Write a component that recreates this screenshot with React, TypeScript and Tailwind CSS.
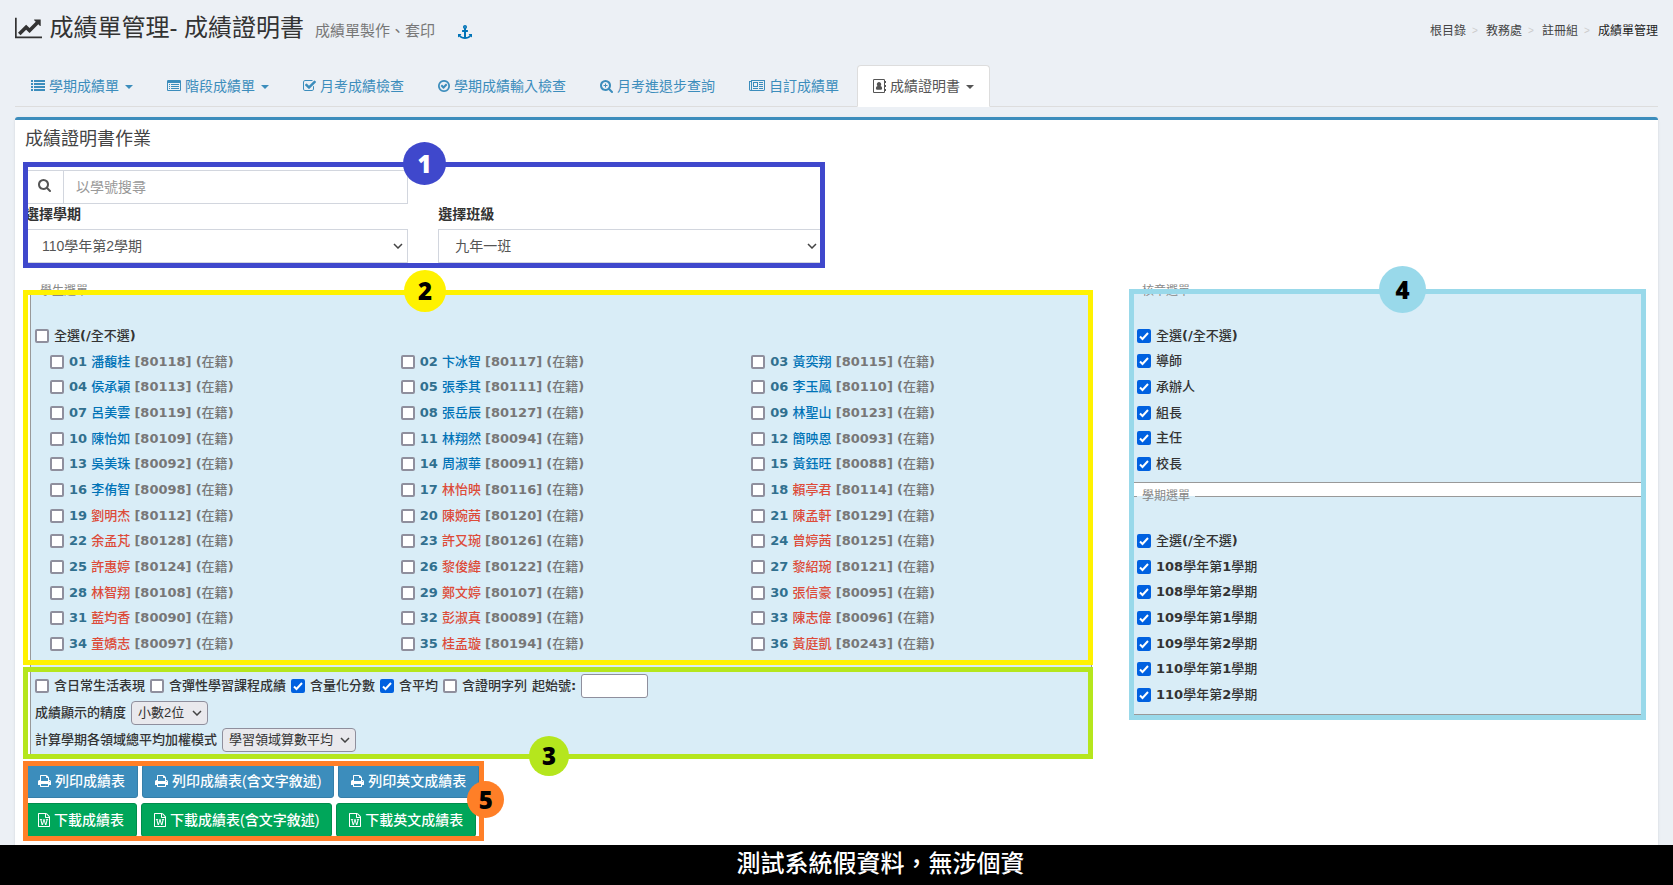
import React from "react";
import classNames from "clsx";

const icons = {
  lineChart: {
    box: "0 0 2048 1792",
    d: "M2048 1536v128h-2048v-1536h128v1408h1920zm-128-1248v435q0 21-19.5 29.5t-35.5-7.5l-121-121-633 633q-10 10-23 10t-23-10l-233-233-416 416-192-192 585-585q10-10 23-10t23 10l233 233 464-464-121-121q-16-16-7.5-35.5t29.5-19.5h435q14 0 23 9t9 23z",
  },
  anchor: {
    box: "0 0 1792 1792",
    d: "M960 256q0-26-19-45t-45-19-45 19-19 45 19 45 45 19 45-19 19-45zm832 928v352q0 22-20 30-8 2-12 2-12 0-23-9l-93-93q-119 143-318.5 226.5t-429.5 83.5-429.5-83.5-318.5-226.5l-93 93q-9 9-23 9-4 0-12-2-20-8-20-30v-352q0-14 9-23t23-9h352q22 0 30 20 8 19-7 35l-100 100q67 91 189.5 153.5t271.5 82.5v-647h-192q-26 0-45-19t-19-45v-128q0-26 19-45t45-19h192v-163q-58-34-93-92.5t-35-128.5q0-106 75-181t181-75 181 75 75 181q0 70-35 128.5t-93 92.5v163h192q26 0 45 19t19 45v128q0 26-19 45t-45 19h-192v647q149-20 271.5-82.5t189.5-153.5l-100-100q-15-16-7-35 8-20 30-20h352q14 0 23 9t9 23z",
  },
  list: {
    box: "0 0 1792 1792",
    d: "M0 128h256v256h-256zM384 128h1408v256h-1408zM0 512h256v256h-256zM384 512h1408v256h-1408zM0 896h256v256h-256zM384 896h1408v256h-1408zM0 1280h256v256h-256zM384 1280h1408v256h-1408z",
  },
  listAlt: {
    box: "0 0 1792 1792",
    d: "M256 640h128v128h-128zM512 640h1024v128h-1024zM256 896h128v128h-128zM512 896h1024v128h-1024zM256 1152h128v128h-128zM512 1152h1024v128h-1024zM1664 1376v-832q0-13-9.5-22.5t-22.5-9.5h-1472q-13 0-22.5 9.5t-9.5 22.5v832q0 13 9.5 22.5t22.5 9.5h1472q13 0 22.5-9.5t9.5-22.5zm128-1088v1088q0 66-47 113t-113 47h-1472q-66 0-113-47t-47-113v-1088q0-66 47-113t113-47h1472q66 0 113 47t47 113z",
  },
  checkSquare: {
    box: "64 0 1664 1792",
    d: "M1472 930v318q0 119-84.5 203.5t-203.5 84.5h-832q-119 0-203.5-84.5t-84.5-203.5v-832q0-119 84.5-203.5t203.5-84.5h832q63 0 117 25 15 7 18 23 3 17-9 29l-49 49q-10 10-23 10-3 0-9-2-23-6-45-6h-832q-66 0-113 47t-47 113v832q0 66 47 113t113 47h832q66 0 113-47t47-113v-254q0-13 9-22l64-64q10-10 23-10 6 0 12 3 20 8 20 29zm231-489l-814 814q-24 24-57 24t-57-24l-430-430q-24-24-24-57t24-57l110-110q24-24 57-24t57 24l263 263 647-647q24-24 57-24t57 24l110 110q24 24 24 57t-24 57z",
  },
  checkCircle: {
    box: "128 0 1536 1792",
    d: "M1299 813l-422 422q-19 19-45 19t-45-19l-294-294q-19-19-19-45t19-45l102-102q19-19 45-19t45 19l147 147 275-275q19-19 45-19t45 19l102 102q19 19 19 45t-19 45zm141 83q0-148-73-273t-198-198-273-73-273 73-198 198-73 273 73 273 198 198 273 73 273-73 198-198 73-273zm224 0q0 209-103 385.5t-279.5 279.5-385.5 103-385.5-103-279.5-279.5-103-385.5 103-385.5 279.5-279.5 385.5-103 385.5 103 279.5 279.5 103 385.5z",
  },
  search: {
    box: "64 0 1664 1792",
    d: "M1216 832q0-185-131.5-316.5t-316.5-131.5-316.5 131.5-131.5 316.5 131.5 316.5 316.5 131.5 316.5-131.5 131.5-316.5zm512 832q0 52-38 90t-90 38q-54 0-90-38l-343-342q-179 124-399 124-143 0-273.5-55.5t-225-150-150-225-55.5-273.5 55.5-273.5 150-225 225-150 273.5-55.5 273.5 55.5 225 150 150 225 55.5 273.5q0 220-124 399l343 343q37 37 37 90z",
  },
  searchPlus: {
    box: "64 0 1664 1792",
    d: "M1024 800v64q0 13-9.5 22.5t-22.5 9.5h-160v160q0 13-9.5 22.5t-22.5 9.5h-64q-13 0-22.5-9.5t-9.5-22.5v-160h-160q-13 0-22.5-9.5t-9.5-22.5v-64q0-13 9.5-22.5t22.5-9.5h160v-160q0-13 9.5-22.5t22.5-9.5h64q13 0 22.5 9.5t9.5 22.5v160h160q13 0 22.5 9.5t9.5 22.5zM1216 832q0-185-131.5-316.5t-316.5-131.5-316.5 131.5-131.5 316.5 131.5 316.5 316.5 131.5 316.5-131.5 131.5-316.5zm512 832q0 52-38 90t-90 38q-54 0-90-38l-343-342q-179 124-399 124-143 0-273.5-55.5t-225-150-150-225-55.5-273.5 55.5-273.5 150-225 225-150 273.5-55.5 273.5 55.5 225 150 150 225 55.5 273.5q0 220-124 399l343 343q37 37 37 90z",
  },
  newspaper: {
    box: "0 0 2048 1792",
    d: "M1024 512h-384v384h384v-384zm128 640v128h-640v-128h640zm0-768v640h-640v-640h640zm640 768v128h-512v-128h512zm0-256v128h-512v-128h512zm0-256v128h-512v-128h512zm0-256v128h-512v-128h512zm-1536 960v-960h-128v960q0 26 19 45t45 19 45-19 19-45zm1664 0v-1088h-1536v1088q0 33-11 64h1483q26 0 45-19t19-45zm128-1216v1216q0 80-56 136t-136 56h-1664q-80 0-136-56t-56-136v-1088h256v-128h1792z",
  },
  addressBook: {
    box: "0 0 1664 1792",
    d: "M160 0h1216q66 0 113 47t47 113v1472q0 66-47 113t-113 47h-1216q-66 0-113-47t-47-113v-1472q0-66 47-113t113-47zm0 128q-32 0-32 32v1472q0 32 32 32h1216q32 0 32-32v-1472q0-32-32-32zM768 384q115 0 198 83t83 199q0 130-90 214 209 20 209 312 0 88-60 136t-142 48h-396q-82 0-142-48t-60-136q0-292 209-312-90-84-90-214 0-116 83-199t198-83zM1536 256h128v256h-128zM1536 768h128v256h-128zM1536 1280h128v256h-128z",
  },
  print: {
    box: "64 0 1664 1792",
    d: "M448 1536h896v-256h-896v256zm0-640h896v-384h-160q-40 0-68-28t-28-68v-160h-640v640zm1152 64q0-26-19-45t-45-19-45 19-19 45 19 45 45 19 45-19 19-45zm128 0v416q0 13-9.5 22.5t-22.5 9.5h-224v160q0 40-28 68t-68 28h-960q-40 0-68-28t-28-68v-160h-224q-13 0-22.5-9.5t-9.5-22.5v-416q0-79 56.5-135.5t135.5-56.5h64v-544q0-40 28-68t68-28h672q40 0 88 20t76 48l152 152q28 28 48 76t20 88v256h64q79 0 135.5 56.5t56.5 135.5z",
  },
  fileWord: {
    box: "128 0 1536 1792",
    d: "M1596 380q28 28 48 76t20 88v1152q0 40-28 68t-68 28h-1344q-40 0-68-28t-28-68v-1600q0-40 28-68t68-28h896q40 0 88 20t76 48zm-444-244v376h376q-10-29-22-41l-313-313q-12-12-41-22zm384 1528v-1024h-416q-40 0-68-28t-28-68v-416h-768v1536h1280zm-1175-896v107h70l164 661h159l128-485q7-20 10-46 2-16 2-24h4l3 24q1 3 3.5 20t5.5 26l128 485h159l164-661h70v-107h-300v107h90l-99 438q-5 20-7 46l-2 21h-4q0-3-.5-6.5t-1.5-8-1-6.5q-1-5-4-21t-5-25l-144-545h-114l-144 545q-2 9-4.5 24.5t-3.5 21.5l-4 21h-4l-2-21q-2-26-7-46l-99-438h90v-107h-300z",
  },
};

type IconName = keyof typeof icons;

const Icon = ({ name, className }: { name: IconName; className?: string }) => (
  <svg
    viewBox={icons[name].box}
    fill="currentColor"
    fillRule="evenodd"
    aria-hidden="true"
    className={classNames("w-auto shrink-0", className || "h-3.5")}
  >
    <path d={icons[name].d} />
  </svg>
);

const tabs: { icon: IconName; label: string; menu?: boolean; active?: boolean }[] = [
  { icon: "list", label: "學期成績單", menu: true },
  { icon: "listAlt", label: "階段成績單", menu: true },
  { icon: "checkSquare", label: "月考成績檢查" },
  { icon: "checkCircle", label: "學期成績輸入檢查" },
  { icon: "searchPlus", label: "月考進退步查詢" },
  { icon: "newspaper", label: "自訂成績單" },
  { icon: "addressBook", label: "成績證明書", menu: true, active: true },
];

const crumbs = ["根目錄", "教務處", "註冊組", "成績單管理"];

// seat order, the first 16 are boys
const students: [string, string][] = [
  ["潘馥桂", "80118"],
  ["卞冰智", "80117"],
  ["黃奕翔", "80115"],
  ["侯承穎", "80113"],
  ["張季其", "80111"],
  ["李玉鳳", "80110"],
  ["呂美雲", "80119"],
  ["張岳辰", "80127"],
  ["林聖山", "80123"],
  ["陳怡如", "80109"],
  ["林翔然", "80094"],
  ["簡映恩", "80093"],
  ["吳美珠", "80092"],
  ["周淑華", "80091"],
  ["黃鈺旺", "80088"],
  ["李侑智", "80098"],
  ["林怡映", "80116"],
  ["賴亭君", "80114"],
  ["劉明杰", "80112"],
  ["陳婉茜", "80120"],
  ["陳孟軒", "80129"],
  ["余孟芃", "80128"],
  ["許又琬", "80126"],
  ["曾婷茜", "80125"],
  ["許惠婷", "80124"],
  ["黎俊緯", "80122"],
  ["黎紹琬", "80121"],
  ["林智翔", "80108"],
  ["鄭文婷", "80107"],
  ["張信豪", "80095"],
  ["藍均香", "80090"],
  ["彭淑真", "80089"],
  ["陳志偉", "80096"],
  ["童嬌志", "80097"],
  ["桂孟璇", "80194"],
  ["黃庭凱", "80243"],
];

const stamps = ["全選(/全不選)", "導師", "承辦人", "組長", "主任", "校長"];

const semesters = [
  "全選(/全不選)",
  "108學年第1學期",
  "108學年第2學期",
  "109學年第1學期",
  "109學年第2學期",
  "110學年第1學期",
  "110學年第2學期",
];

const options = [
  { label: "含日常生活表現", checked: false },
  { label: "含彈性學習課程成績", checked: false },
  { label: "含量化分數", checked: true },
  { label: "含平均", checked: true },
  { label: "含證明字列", checked: false },
];

// digits and brackets are bold, Chinese stays medium
const Mixed = ({ text }: { text: string }) => (
  <>
    {text.split(/([!-~]+)/).map((part, index) =>
      index % 2 ? (
        <b key={index} className="font-bold">
          {part}
        </b>
      ) : (
        part
      )
    )}
  </>
);

const Check = ({
  checked,
  children,
}: {
  checked?: boolean;
  children: React.ReactNode;
}) => (
  <label className="flex items-center gap-[5px] whitespace-nowrap">
    <span className="grid size-3.5 shrink-0">
      <input
        type="checkbox"
        defaultChecked={checked}
        className="peer col-start-1 row-start-1 size-3.5 appearance-none rounded-xs border-2 border-[#8f8f9d] bg-white checked:border-[#0061e0] checked:bg-[#0061e0]"
      />
      <svg
        viewBox="0 0 14 14"
        className="pointer-events-none invisible col-start-1 row-start-1 size-3.5 fill-none stroke-white stroke-2 peer-checked:visible"
      >
        <path d="M3 7.5L5.5 10L11 4" />
      </svg>
    </span>
    <span>{children}</span>
  </label>
);

const Select = ({
  id,
  value,
  className,
  arrow,
}: {
  id: string;
  value: string;
  className: string;
  arrow: string;
}) => (
  <span className="relative flex items-center">
    <select id={id} className={classNames("appearance-none", className)}>
      <option>{value}</option>
    </select>
    <svg
      viewBox="0 0 10 6"
      className={classNames(
        "pointer-events-none absolute h-1.5 w-2.5 fill-none stroke-[#444] stroke-[1.5]",
        arrow
      )}
    >
      <path d="M1 1L5 5L9 1" />
    </svg>
  </span>
);

const Frame = ({
  step,
  className,
  badge,
}: {
  step: number;
  className: string;
  badge: string;
}) => (
  <div className={classNames("pointer-events-none absolute z-10 border-5", className)}>
    <span
      className={classNames(
        "absolute flex items-center justify-center rounded-full font-['Open_Sans',sans-serif] text-2xl font-extrabold",
        badge
      )}
    >
      {step}
    </span>
  </div>
);

const Fieldset = ({
  legend,
  children,
  className,
}: {
  legend: string;
  children: React.ReactNode;
  className?: string;
}) => (
  <fieldset
    className={classNames(
      "min-w-0 border border-[#999] bg-[#d9edf7] px-1 font-['DejaVu_Sans','Noto_Sans_CJK_TC',sans-serif] text-[13px] leading-5 font-medium text-[#333]",
      className
    )}
  >
    <legend className="px-[5px] text-xs leading-4 font-normal text-[#888]">{legend}</legend>
    {children}
  </fieldset>
);

const PrintButtons = ({
  icon,
  verb,
  className,
}: {
  icon: IconName;
  verb: string;
  className: string;
}) => (
  <div className="flex gap-1">
    {["成績表", "成績表(含文字敘述)", "英文成績表"].map((name) => (
      <button
        key={name}
        type="button"
        className={classNames(
          "flex h-[34px] items-center gap-1 rounded-[3px] border px-3 text-sm font-medium whitespace-nowrap text-white",
          className
        )}
      >
        <Icon name={icon} />
        {verb}
        {name}
      </button>
    ))}
  </div>
);

const App = () => {
  return (
    <div
      lang="zh-TW"
      className="min-h-screen bg-[#ecf0f5] font-['Liberation_Sans','Noto_Sans_CJK_TC',sans-serif] text-sm text-[#333]"
    >
      <header className="flex items-start justify-between px-[15px] pt-3.5">
        <div className="flex items-center">
          <h1 className="flex items-center gap-[7px] text-2xl leading-7">
            <Icon name="lineChart" className="h-6" />
            成績單管理- 成績證明書
          </h1>
          <small className="mt-1.5 ml-[11px] text-[15px] leading-5 text-[#777]">
            成績單製作、套印
          </small>
          <a href="#" className="mt-2 ml-[23px] text-[#0073b7]" aria-label="anchor">
            <Icon name="anchor" />
          </a>
        </div>
        <nav className="flex pt-2 text-xs leading-[18px]">
          {crumbs.map((crumb, index) => (
            <React.Fragment key={crumb}>
              {index > 0 && <span className="w-5 pl-1.5 text-[10px] text-[#ccc]">&gt;</span>}
              <a
                href="#"
                className={index === crumbs.length - 1 ? "text-[#222]" : "text-[#444]"}
              >
                {crumb}
              </a>
            </React.Fragment>
          ))}
        </nav>
      </header>

      <nav className="mx-[15px] mt-[23px] flex gap-0.5 border-b border-[#ddd]">
        {tabs.map((tab) => (
          <a
            key={tab.label}
            href="#"
            className={classNames(
              "-mb-px flex items-center gap-1 rounded-t border px-[15px] py-2.5 leading-5 whitespace-nowrap",
              tab.active
                ? "border-[#ddd] border-b-white bg-white text-[#555]"
                : "border-transparent text-[#3c8dbc]"
            )}
          >
            <Icon name={tab.icon} />
            {tab.label}
            {tab.menu && (
              <svg viewBox="0 0 8 4" className="mt-0.5 ml-0.5 h-1 w-2" fill="currentColor">
                <path d="M0 0h8L4 4z" />
              </svg>
            )}
          </a>
        ))}
      </nav>

      <main className="mx-[15px] mt-2.5 rounded-t-[3px] border-t-3 border-[#3c8dbc] bg-white px-2.5 pt-[9px] pb-2 shadow-sm">
        <h2 className="text-lg leading-5 text-[#444]">成績證明書作業</h2>

        <form className="relative mt-[21px] grid w-[calc(50%-15px)] grid-cols-2 gap-x-[30px]">
          <div className="flex h-[34px] border border-[#d2d6de]">
            <label
              htmlFor="student-no"
              className="flex w-[38px] items-center justify-center border-r border-[#d2d6de] pb-1 text-[#555]"
            >
              <Icon name="search" />
            </label>
            <input
              id="student-no"
              placeholder="以學號搜尋"
              className="min-w-0 flex-1 px-3 placeholder:text-[#999]"
            />
          </div>
          <div className="col-start-1">
            <label htmlFor="semester" className="mb-[5px] block leading-5 font-bold">
              選擇學期
            </label>
            <Select
              id="semester"
              value="110學年第2學期"
              className="h-[34px] w-full border border-[#d2d6de] bg-white px-4 text-[#555]"
              arrow="right-[5px]"
            />
          </div>
          <div>
            <label htmlFor="class" className="mb-[5px] block leading-5 font-bold">
              選擇班級
            </label>
            <Select
              id="class"
              value="九年一班"
              className="h-[34px] w-full border border-[#d2d6de] bg-white px-4 text-[#555]"
              arrow="right-[5px]"
            />
          </div>
          <Frame
            step={1}
            className="-top-2 -right-[3px] -bottom-[5px] -left-0.5 border-[#3f48cc]"
            badge="-top-[25px] left-[375px] size-[43px] bg-[#3f48cc] text-white"
          />
        </form>

        <div className="mt-5 grid grid-cols-12 gap-[30px]">
          <div className="col-span-8 px-[5px]">
            <Fieldset legend="學生選單" className="pb-1">
              <div className="relative pt-6">
                <div className="grid h-[334px] auto-rows-fr grid-cols-3">
                  <div className="col-span-3 grid items-center">
                    <Check>
                      <Mixed text="全選(/全不選)" />
                    </Check>
                  </div>
                  {students.map(([name, no], index) => (
                    <div key={no} className="grid items-center pl-[15px]">
                      <Check>
                        <b className="text-[#31708f]">
                          {String(index + 1).padStart(2, "0")}
                        </b>{" "}
                        <span className={index < 16 ? "text-[#0073b7]" : "text-[#dd4b39]"}>
                          {name}
                        </span>{" "}
                        <span className="text-[#777]">
                          <Mixed text={`[${no}] (在籍)`} />
                        </span>
                      </Check>
                    </div>
                  ))}
                </div>
                <Frame
                  step={2}
                  className="-top-[9px] -right-1.5 -bottom-2 -left-3 border-[#fff200]"
                  badge="-top-[25px] left-[376px] size-[42px] bg-[#fff200] text-black"
                />
              </div>

              <div className="relative mt-[17px] flex flex-col gap-[3px]">
                <div className="flex items-center gap-[5px]">
                  {options.map((option) => (
                    <Check key={option.label} checked={option.checked}>
                      {option.label}
                    </Check>
                  ))}
                  <label htmlFor="start-no" className="whitespace-nowrap">
                    <Mixed text="起始號:" />
                  </label>
                  <input
                    id="start-no"
                    className="h-6 w-[67px] rounded-[3px] border border-[#8f8f9d] bg-white px-1"
                  />
                </div>
                <div className="flex items-center gap-[5px]">
                  <label htmlFor="precision">成績顯示的精度</label>
                  <Select
                    id="precision"
                    value="小數2位"
                    className="h-6 w-[77px] rounded border border-[#8f8f9d] bg-[#e9e9ed] pl-1.5 font-['Liberation_Sans','Noto_Sans_CJK_TC',sans-serif] font-normal"
                    arrow="right-1.5"
                  />
                </div>
                <div className="flex items-center gap-[5px]">
                  <label htmlFor="weighting">計算學期各領域總平均加權模式</label>
                  <Select
                    id="weighting"
                    value="學習領域算數平均"
                    className="h-6 w-[134px] rounded border border-[#8f8f9d] bg-[#e9e9ed] pl-1.5 font-['Liberation_Sans','Noto_Sans_CJK_TC',sans-serif] font-normal"
                    arrow="right-1.5"
                  />
                </div>
                <Frame
                  step={3}
                  className="-top-[7px] -right-1.5 -bottom-[7px] -left-3 border-[#b5e61d]"
                  badge="-bottom-[22px] left-[501px] size-10 bg-[#b5e61d] text-black"
                />
              </div>
            </Fieldset>
          </div>

          <div className="col-span-4 px-[5px]">
            <div className="relative flex flex-col gap-[5px]">
              <Fieldset legend="核章選單" className="pb-[5px]">
                <div className="mt-6 grid h-[154px] auto-rows-fr items-center">
                  {stamps.map((stamp) => (
                    <Check key={stamp} checked>
                      <Mixed text={stamp} />
                    </Check>
                  ))}
                </div>
              </Fieldset>
              <Fieldset legend="學期選單" className="pb-1.5">
                <div className="mt-6 grid h-[180px] auto-rows-fr items-center">
                  {semesters.map((semester) => (
                    <Check key={semester} checked>
                      <Mixed text={semester} />
                    </Check>
                  ))}
                </div>
              </Fieldset>
              <Frame
                step={4}
                className="top-1.5 -right-[3px] -bottom-[5px] -left-[3px] border-[#99d9ea]"
                badge="-top-7 left-[245px] size-[47px] bg-[#99d9ea] text-black"
              />
            </div>
          </div>
        </div>

        <div className="relative mt-[7px] flex w-fit flex-col gap-[5px]">
          <PrintButtons icon="print" verb="列印" className="border-[#367fa9] bg-[#3c8dbc]" />
          <PrintButtons icon="fileWord" verb="下載" className="border-[#008d4c] bg-[#00a65a]" />
          <Frame
            step={5}
            className="-top-[3px] -right-[5px] -bottom-1 -left-0.5 border-[#ff7f27]"
            badge="top-[15px] -right-[25px] size-[37px] bg-[#ff7f27] text-black"
          />
        </div>
      </main>

      <footer className="bg-black pt-px pb-[3px] pl-[88px] text-center text-2xl leading-9 font-medium text-white">
        測試系統假資料，無涉個資
      </footer>
    </div>
  );
};

export default App;
